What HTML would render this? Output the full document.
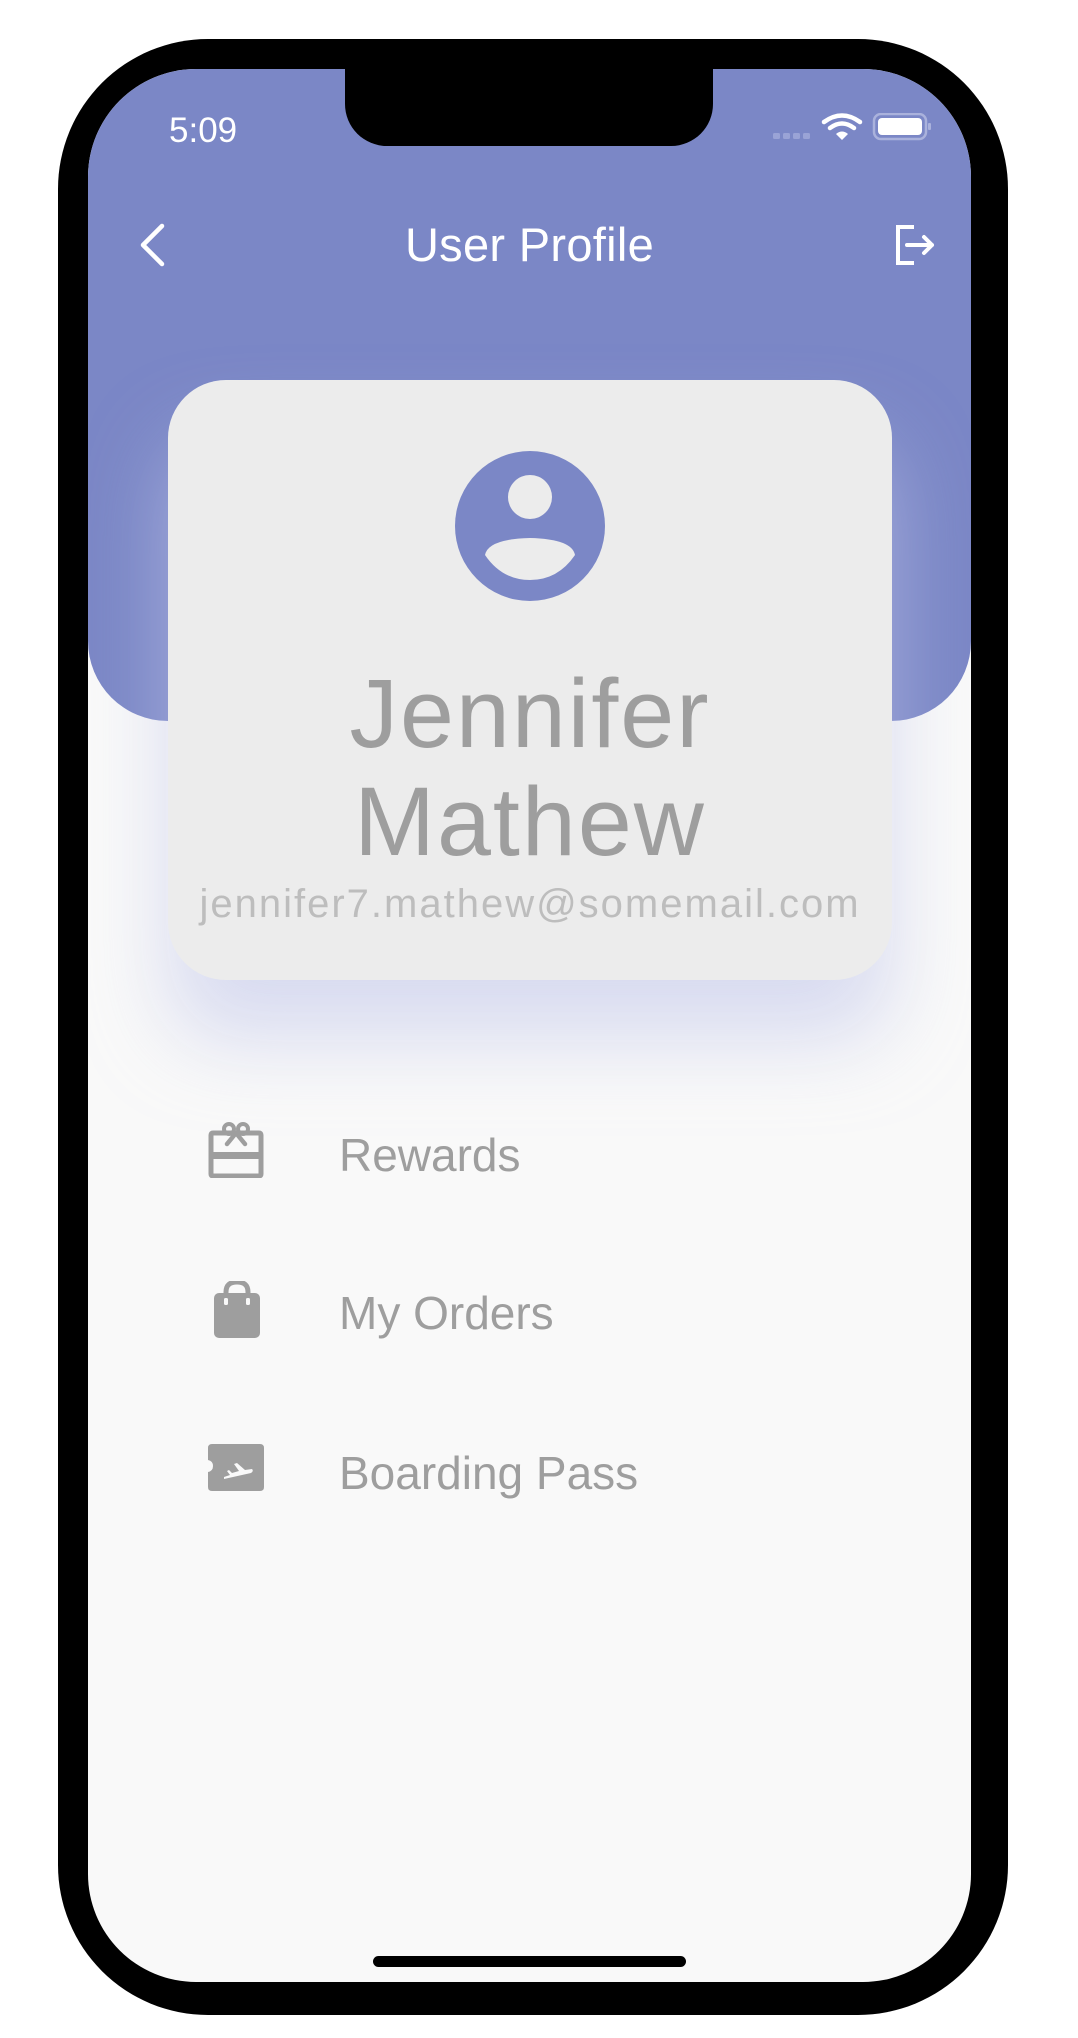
<!DOCTYPE html>
<html><head><meta charset="utf-8"><style>
*{margin:0;padding:0;box-sizing:border-box}
body{width:1078px;height:2038px;background:#fff;position:relative;overflow:hidden;font-family:"Liberation Sans",sans-serif}
.phone{position:absolute;left:58px;top:39px;width:950px;height:1976px;background:#000;border-radius:150px}
.screen{position:absolute;left:88px;top:69px;width:883px;height:1913px;background:#f9f9f9;border-radius:108px;overflow:hidden}
.header{position:absolute;left:0;top:0;width:883px;height:652px;background:#7b87c6;border-radius:0 0 80px 80px}
.notch{position:absolute;left:257px;top:-2px;width:368px;height:79px;background:#000;border-radius:0 0 42px 42px}
.time{position:absolute;left:81px;top:44px;color:#fff;font-size:35px;line-height:1}
.title{position:absolute;left:0;width:883px;top:152px;text-align:center;color:#fff;font-size:47px;line-height:1;letter-spacing:0.3px}
.card{position:absolute;left:80px;top:311px;width:724px;height:600px;background:#ececec;border-radius:58px;box-shadow:0 60px 80px 0 rgba(195,200,235,.6)}
.name{position:absolute;left:0;width:724px;text-align:center;color:#9e9e9e;font-size:97px;letter-spacing:2px;line-height:1}
.email{position:absolute;left:0;width:724px;top:504px;text-align:center;color:#bdbdbd;font-size:40px;letter-spacing:2px;line-height:1}
.item{position:absolute;left:251px;color:#9e9e9e;font-size:46px;line-height:1}
.home{position:absolute;left:285px;top:1887px;width:313px;height:11px;background:#000;border-radius:6px}
svg{position:absolute}
</style></head><body>
<div class="phone"></div>
<div class="screen">
  <div class="header"></div>
  <div class="notch"></div>
  <div class="time">5:09</div>
  <svg style="left:685px;top:44px" width="160" height="30" viewBox="0 0 160 30">
    <g fill="#9aa3d6"><rect x="0" y="20" width="7" height="6" rx="1.5"/><rect x="10" y="20" width="7" height="6" rx="1.5"/><rect x="20" y="20" width="7" height="6" rx="1.5"/><rect x="30" y="20" width="7" height="6" rx="1.5"/></g>
    <path d="M51 9 Q69 -4 87 9" stroke="#fff" stroke-width="4.5" fill="none" stroke-linecap="round"/>
    <path d="M57 15 Q69 6 81 15" stroke="#fff" stroke-width="4.5" fill="none" stroke-linecap="round"/>
    <path d="M63 21 L69 27 L75 21 Q69 16 63 21Z" fill="#fff"/>
    <rect x="101" y="1" width="52" height="25" rx="7" fill="none" stroke="#aab2dc" stroke-width="2.5"/>
    <rect x="105" y="5" width="44" height="17" rx="4" fill="#fff"/>
    <rect x="155" y="10" width="3" height="7" rx="1" fill="#aab2dc"/>
  </svg>
  <svg style="left:50px;top:154px" width="30" height="44" viewBox="0 0 30 44"><path d="M24 3 L5 22 L24 41" stroke="#fff" stroke-width="4.5" fill="none" stroke-linecap="round" stroke-linejoin="round"/></svg>
  <div class="title">User Profile</div>
  <svg style="left:806px;top:154px" width="46" height="44" viewBox="0 0 46 44"><path d="M20 4 H4 V40 H20" stroke="#fff" stroke-width="4" fill="none"/><path d="M13 22 H38 M30 14 L38 22 L30 30" stroke="#fff" stroke-width="4" fill="none" stroke-linecap="round" stroke-linejoin="round"/></svg>
  <div class="card">
    <svg style="left:287px;top:71px" width="150" height="150" viewBox="0 0 150 150">
      <circle cx="75" cy="75" r="75" fill="#7b87c6"/>
      <circle cx="75" cy="46" r="22" fill="#ececec"/>
      <path d="M30 104 Q33 88 75 87 Q117 88 120 104 Q103 129 75 129 Q47 129 30 104Z" fill="#ececec"/>
    </svg>
    <div class="name" style="top:285px">Jennifer</div>
    <div class="name" style="top:393px">Mathew</div>
    <div class="email">jennifer7.mathew@somemail.com</div>
  </div>
  <svg style="left:120px;top:1053px" width="56" height="56" viewBox="0 0 56 56">
    <path d="M5 11 H51 Q53 11 53 13 V52 Q53 54 51 54 H5 Q3 54 3 52 V13 Q3 11 5 11Z" fill="none" stroke="#9e9e9e" stroke-width="5"/>
    <rect x="3" y="30" width="50" height="7" fill="#9e9e9e"/>
    <circle cx="21" cy="7" r="5" fill="none" stroke="#9e9e9e" stroke-width="4"/><circle cx="35" cy="7" r="5" fill="none" stroke="#9e9e9e" stroke-width="4"/>
    <path d="M28 11 L19 22 M28 11 L37 22" stroke="#9e9e9e" stroke-width="4.5" stroke-linecap="round"/>
  </svg>
  <svg style="left:125px;top:1212px" width="48" height="58" viewBox="0 0 48 58">
    <rect x="1" y="12" width="46" height="45" rx="5" fill="#9e9e9e"/>
    <path d="M13 14 V11 Q13 1 24 1 Q35 1 35 11 V14" stroke="#9e9e9e" stroke-width="5" fill="none"/>
    <rect x="11" y="17" width="4" height="7" rx="1.5" fill="#f9f9f9"/><rect x="33" y="17" width="4" height="7" rx="1.5" fill="#f9f9f9"/>
  </svg>
  <svg style="left:120px;top:1375px" width="56" height="47" viewBox="0 0 56 47">
    <path d="M4 0 H52 Q56 0 56 4 V43 Q56 47 52 47 H4 Q0 47 0 43 V28 Q5 27 5 22 Q5 17 0 16 V4 Q0 0 4 0Z" fill="#9e9e9e"/>
    <path d="M16 35 L43 29 Q46 27 44 25 L37 26 L29 19 L26 20 L31 27 L24 29 L21 26 L19 27 L22 31 L16 33Z" fill="#f9f9f9"/>
  </svg>
  <div class="item" style="top:1063px">Rewards</div>
  <div class="item" style="top:1221px">My Orders</div>
  <div class="item" style="top:1381px">Boarding Pass</div>
  <div class="home"></div>
</div>
</body></html>
